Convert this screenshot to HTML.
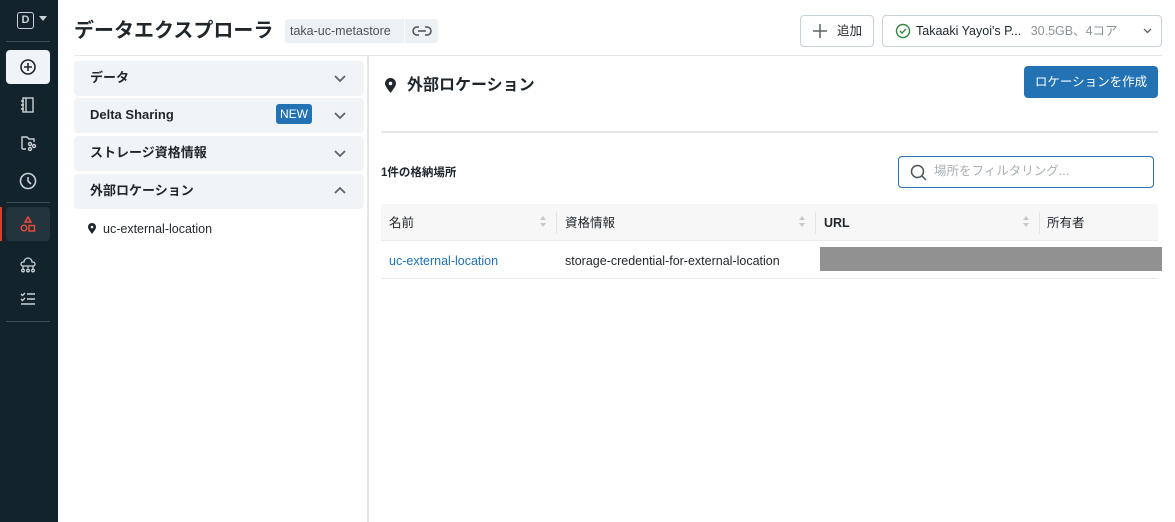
<!DOCTYPE html>
<html><head><meta charset="utf-8"><style>
*{box-sizing:border-box;margin:0;padding:0}
body{width:1175px;height:522px;overflow:hidden;background:#fff;font-family:"Liberation Sans","Noto Sans CJK JP",sans-serif;color:#1f272d;position:relative;line-height:16px}
.abs{position:absolute}
.sb{left:0;top:0;width:58px;height:522px;background:#13232b}
.hr{position:absolute;left:6px;width:44px;height:1px;background:#3e4c54}
.ic{position:absolute;left:17px;width:22px;height:22px}
.acc{position:absolute;left:74px;width:290px;height:35px;background:#f1f4f7;border-radius:4px;font-size:13px;font-weight:bold;padding-left:16px;line-height:33px}
.chev{position:absolute;right:18px;top:12px}
.th{font-size:12.5px;color:#1f272d;line-height:16px}
</style></head><body>
<div class="abs sb">
 <div class="abs" style="left:17px;top:12px;width:17px;height:17px;border:1.5px solid #c9d1d6;border-radius:3px;color:#c9d1d6;font-size:11px;font-weight:bold;text-align:center;line-height:14px">D</div>
 <svg class="abs" style="left:39px;top:16px" width="9" height="6"><path d="M0 0h8l-4 5z" fill="#c9d1d6"/></svg>
 <div class="hr" style="top:41px"></div>
 <div class="abs" style="left:6px;top:50px;width:44px;height:34px;background:#f1f4f7;border-radius:4px"></div>
 <svg class="ic" style="top:56px" viewBox="0 0 22 22"><circle cx="11" cy="11" r="7" fill="none" stroke="#1f272d" stroke-width="1.6"/><path d="M11 7v8M7 11h8" stroke="#1f272d" stroke-width="1.6"/></svg>
 <svg class="ic" style="top:94px" viewBox="0 0 22 22" fill="none" stroke="#c9d1d6" stroke-width="1.4"><rect x="6" y="4" width="10" height="14"/><path d="M9 4v14M4 7h3M4 11h3M4 15h3"/></svg>
 <svg class="ic" style="top:132px" viewBox="0 0 22 22" fill="none" stroke="#c9d1d6" stroke-width="1.4"><path d="M5 17V5h5l2 2h5v3M5 17h4"/><circle cx="13" cy="12" r="1.5"/><circle cx="13" cy="17" r="1.5"/><circle cx="17" cy="14" r="1.5"/></svg>
 <svg class="ic" style="top:170px" viewBox="0 0 22 22" fill="none" stroke="#c9d1d6" stroke-width="1.6"><circle cx="11" cy="11" r="7.5"/><path d="M11 7v4l3 3"/></svg>
 <div class="hr" style="top:202px"></div>
 <div class="abs" style="left:6px;top:207px;width:44px;height:34px;background:#24343c;border-radius:4px"></div>
 <div class="abs" style="left:0;top:207px;width:2px;height:34px;background:#e03c2d"></div>
 <svg class="ic" style="top:213px" viewBox="0 0 22 22" fill="none" stroke="#f04a3a" stroke-width="1.4"><path d="M11 4l3 5h-6z"/><circle cx="7" cy="15" r="2.8"/><rect x="12" y="12.5" width="5.5" height="5.5"/></svg>
 <svg class="ic" style="top:252px" viewBox="0 0 22 22" fill="none" stroke="#c9d1d6" stroke-width="1.3"><path d="M7 10a4 4 0 0 1 8 0h1a2 2 0 0 1 0 4H6a2 2 0 0 1 0-4zM11 14v2M6 14v3M16 14v3"/><circle cx="6" cy="18.5" r="1.3"/><circle cx="11" cy="18.5" r="1.3"/><circle cx="16" cy="18.5" r="1.3"/></svg>
 <svg class="ic" style="top:288px" viewBox="0 0 22 22" fill="none" stroke="#c9d1d6" stroke-width="1.4"><path d="M4 6l1.5 1.5L8 5M10 6h8M4 11l1.5 1.5L8 10M10 11h8M4 16h14"/></svg>
 <div class="hr" style="top:321px"></div>
</div>

<div class="abs" style="left:74px;top:18px;font-size:20px;line-height:26px;font-weight:bold;color:#1f272d;white-space:nowrap">データエクスプローラ</div>
<div class="abs" style="left:285px;top:19px;height:24px;width:153px;background:#eef1f4;border-radius:3px;font-size:12.5px;color:#4a5358;line-height:24px;padding-left:5px">taka-uc-metastore</div>
<div class="abs" style="left:404px;top:19px;width:1px;height:24px;background:#fff"></div>
<svg class="abs" style="left:412px;top:24px" width="20" height="14" viewBox="0 0 20 14" fill="none" stroke="#4a5358" stroke-width="1.5"><path d="M7 3H5a4 4 0 0 0 0 8h2M13 3h2a4 4 0 0 1 0 8h-2M6 7h8"/></svg>

<div class="abs" style="left:800px;top:15px;width:74px;height:32px;border:1px solid #c7d2da;border-radius:4px;font-size:12.5px;color:#1f272d;line-height:30px;padding-left:36px">追加</div>
<svg class="abs" style="left:813px;top:24px" width="14" height="14"><path d="M7 0v14M0 7h14" stroke="#5a6369" stroke-width="1.5"/></svg>
<div class="abs" style="left:882px;top:15px;width:280px;height:32px;border:1px solid #c7d2da;border-radius:4px;font-size:12.5px;line-height:30px;padding-left:33px;white-space:nowrap">Takaaki Yayoi's P... <span style="color:#8b9499;margin-left:6px">30.5GB、4コア</span></div>
<svg class="abs" style="left:895px;top:23px" width="16" height="16"><circle cx="8" cy="8" r="6.5" fill="none" stroke="#2f8a3d" stroke-width="1.4"/><path d="M5 8l2 2 4-4" fill="none" stroke="#2f8a3d" stroke-width="1.4"/></svg>
<svg class="abs" style="left:1143px;top:28px" width="9" height="6"><path d="M1 1l3.5 3.5L8 1" fill="none" stroke="#5a6369" stroke-width="1.3"/></svg>

<div class="abs" style="left:74px;top:55px;width:1088px;height:1px;background:#e4e8eb"></div>
<div class="abs" style="left:367px;top:56px;width:2px;height:466px;background:#e4e8eb"></div>

<div class="acc" style="top:61px">データ<svg class="chev" width="12" height="8" style="top:14px"><path d="M1 1l5 5 5-5" fill="none" stroke="#5a6369" stroke-width="1.8"/></svg></div>
<div class="acc" style="top:98px">Delta Sharing<span class="abs" style="left:202px;top:6px;height:20px;width:36px;background:#2272b4;color:#fff;border-radius:3px;font-size:12px;font-weight:normal;line-height:20px;text-align:center">NEW</span><svg class="chev" width="12" height="8" style="top:14px"><path d="M1 1l5 5 5-5" fill="none" stroke="#5a6369" stroke-width="1.8"/></svg></div>
<div class="acc" style="top:136px">ストレージ資格情報<svg class="chev" width="12" height="8" style="top:14px"><path d="M1 1l5 5 5-5" fill="none" stroke="#5a6369" stroke-width="1.8"/></svg></div>
<div class="acc" style="top:174px">外部ロケーション<svg class="chev" width="12" height="8" style="top:12px"><path d="M1 7l5-5 5 5" fill="none" stroke="#5a6369" stroke-width="1.8"/></svg></div>
<svg class="abs" style="left:88px;top:223px" width="8" height="11" viewBox="0 0 8 11"><path d="M4 11C1 7 0 5.5 0 4a4 4 0 0 1 8 0c0 1.5-1 3-4 7z" fill="#1f272d"/><circle cx="4" cy="4" r="1.3" fill="#fff"/></svg>
<div class="abs" style="left:103px;top:221px;font-size:12.5px">uc-external-location</div>

<svg class="abs" style="left:385px;top:78px" width="11" height="15" viewBox="0 0 8 11"><path d="M4 11C1 7 0 5.5 0 4a4 4 0 0 1 8 0c0 1.5-1 3-4 7z" fill="#1f272d"/><circle cx="4" cy="4" r="1.3" fill="#fff"/></svg>
<div class="abs" style="left:407px;top:76px;font-size:16px;line-height:20px;font-weight:bold">外部ロケーション</div>
<div class="abs" style="left:1024px;top:66px;width:134px;height:32px;background:#2272b4;border-radius:4px;color:#fff;font-size:12.5px;text-align:center;line-height:32px">ロケーションを作成</div>
<div class="abs" style="left:381px;top:131px;width:777px;height:2px;background:#e4e8eb"></div>
<div class="abs" style="left:381px;top:165px;font-size:11.5px;font-weight:bold">1件の格納場所</div>
<div class="abs" style="left:898px;top:156px;width:256px;height:32px;border:1.5px solid #2272b4;border-radius:4px;font-size:12.5px;color:#a8b0b5;line-height:29px;padding-left:35px">場所をフィルタリング...</div>
<svg class="abs" style="left:910px;top:164px" width="17" height="17"><circle cx="7.5" cy="7.5" r="6" fill="none" stroke="#4a5358" stroke-width="1.5"/><path d="M12 12l4 4" stroke="#4a5358" stroke-width="1.5"/></svg>

<div class="abs" style="left:381px;top:204px;width:777px;height:37px;background:#f7f7f7;border-bottom:1px solid #e8eaec"></div>
<div class="abs th" style="left:389px;top:215px">名前</div>
<div class="abs th" style="left:565px;top:215px">資格情報</div>
<div class="abs th" style="left:824px;top:215px;font-weight:bold">URL</div>
<div class="abs th" style="left:1047px;top:215px">所有者</div>
<div class="abs" style="left:556px;top:212px;width:1px;height:22px;background:#e1e4e6"></div>
<div class="abs" style="left:815px;top:212px;width:1px;height:22px;background:#e1e4e6"></div>
<div class="abs" style="left:1039px;top:212px;width:1px;height:22px;background:#e1e4e6"></div>
<svg class="abs" style="left:539px;top:215px" width="8" height="13"><path d="M4 1l3 4H1zM4 12l3-4H1z" fill="#c5c9cc"/></svg>
<svg class="abs" style="left:798px;top:215px" width="8" height="13"><path d="M4 1l3 4H1zM4 12l3-4H1z" fill="#c5c9cc"/></svg>
<svg class="abs" style="left:1022px;top:215px" width="8" height="13"><path d="M4 1l3 4H1zM4 12l3-4H1z" fill="#c5c9cc"/></svg>
<div class="abs" style="left:389px;top:253px;font-size:12.5px;color:#2272b4">uc-external-location</div>
<div class="abs" style="left:565px;top:253px;font-size:12.5px">storage-credential-for-external-location</div>
<div class="abs" style="left:820px;top:247px;width:342px;height:24px;background:#919191"></div>
<div class="abs" style="left:381px;top:278px;width:777px;height:1px;background:#e8eaec"></div>
</body></html>
